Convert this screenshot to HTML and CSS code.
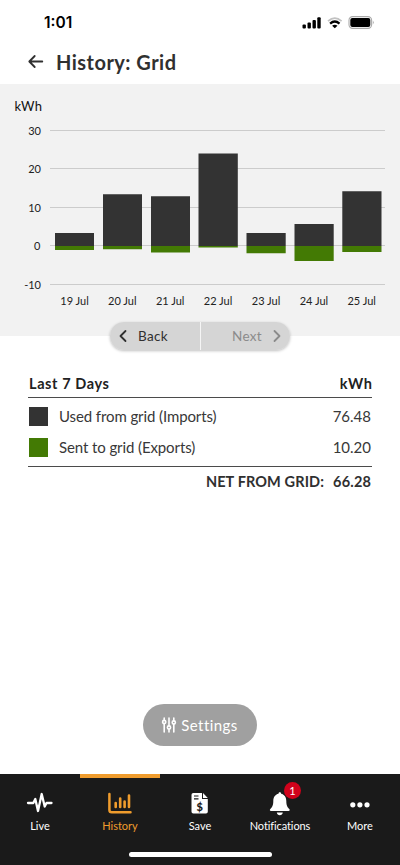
FILE: index.html
```html
<!DOCTYPE html>
<html lang="en">
<head>
<meta charset="utf-8">
<meta name="viewport" content="width=device-width, initial-scale=1">
<title>History: Grid</title>
<link rel="stylesheet" href="styles.css">
</head>
<body>
<div class="app">
  <div class="status">
    <span class="clock">1:01</span>
    <svg class="status-icons" width="74" height="16" viewBox="0 0 74 16">
      <g fill="#000"><rect x="2.500" y="9.500" width="3.400" height="4" rx="1"/><rect x="7.500" y="7.500" width="3.400" height="6" rx="1"/><rect x="12.500" y="5" width="3.400" height="8.500" rx="1"/><rect x="17.300" y="2.200" width="3.400" height="11.300" rx="1"/></g>
      <path d="M28 6.100Q34.800 .1 41.600 6.100" fill="none" stroke="#c2c2c2" stroke-width="1.800"/>
      <path d="M30.100 8.600Q34.800 4.500 39.500 8.600" fill="none" stroke="#000" stroke-width="2.300"/>
      <path d="M32.100 10.700Q34.800 8.600 37.500 10.700L34.800 13.200z"/>
      <rect x="49" y="1.600" width="22.600" height="11.800" rx="3.600" fill="#fff" stroke="#aaa" stroke-width="1.100"/>
      <rect x="50.300" y="3" width="20" height="9" rx="2"/>
      <path d="M72.900 5.600q1.700 1.900 0 3.800z" fill="#999"/>
    </svg>
  </div>
  <header class="header">
    <svg width="16" height="14" viewBox="0 0 16 14" fill="none" stroke="#303030" stroke-width="1.800" stroke-linecap="round" stroke-linejoin="round"><path d="M14.300 6.500H1.500M6.700 1L1.300 6.500L6.700 12"/></svg>
    <h1>History: Grid</h1>
  </header>
  <section class="chart">
    <svg width="400" height="252" viewBox="0 84 400 252">
      <g stroke="#ccc" stroke-width="1"><path d="M50 130.500H385M50 168.500H385M50 207.500H385M50 245.500H385M50 284.500H385"/></g>
      <g fill="#333"><path d="M55 233h39v13H55zM103 194.300h39V246h-39zM151 196.300h39V246h-39zM198.500 153.500h39.300V246h-39.300zM246.500 233h39.200v13h-39.200zM294.500 224h39.200v22h-39.200zM342.300 191.300h39.200V246h-39.200z"/></g>
      <g fill="#437a04"><path d="M55 246h39v4H55zM103 246h39v3.300h-39zM151 246h39v6.500h-39zM198.500 246h39.300v1.600h-39.300zM246.500 246h39.200v7.300h-39.200zM294.500 246h39.200v15h-39.200zM342.300 246h39.200v5.900h-39.200z"/></g>
      <text class="unit" x="14.500" y="110.500" textLength="27.500">kWh</text>
      <g class="tick" text-anchor="end"><text x="41" y="134.500">30</text><text x="41" y="173">20</text><text x="41" y="211.500">10</text><text x="40.500" y="250">0</text><text x="41" y="288.500">-10</text></g>
      <g class="tick" text-anchor="middle"><text x="74.500" y="305">19 Jul</text><text x="122.300" y="305">20 Jul</text><text x="170.200" y="305">21 Jul</text><text x="218.100" y="305">22 Jul</text><text x="266" y="305">23 Jul</text><text x="313.900" y="305">24 Jul</text><text x="361.700" y="305">25 Jul</text></g>
    </svg>
  </section>
  <div class="pager">
    <button class="back"><svg width="8" height="12" viewBox="0 0 8 12"><path d="M6.500 1L1.500 6l5 5"/></svg><span>Back</span></button>
    <button class="next"><span>Next</span><svg width="8" height="12" viewBox="0 0 8 12"><path d="M1.500 1l5 5l-5 5"/></svg></button>
  </div>
  <section class="summary">
    <div class="row head"><span class="period">Last 7 Days</span><span class="head-unit">kWh</span></div>
    <div class="items">
      <div class="row item"><i class="swatch imports"></i><span class="label used">Used from grid (Imports)</span><span class="value">76.48</span></div>
      <div class="row item"><i class="swatch exports"></i><span class="label sent">Sent to grid (Exports)</span><span class="value">10.20</span></div>
    </div>
    <div class="row total"><span class="net">NET FROM GRID:</span><span class="net-value">66.28</span></div>
  </section>
  <button class="settings">
    <svg width="14" height="16" viewBox="0 0 14 16" fill="none" stroke="#fff" stroke-width="1.600" stroke-linecap="round"><path d="M2.200 1V3M2.200 7V15M7 1V8.500M7 12.500V15M11.800 1V3.500M11.800 7.500V15"/><circle cx="2.200" cy="5" r="1.600"/><circle cx="7" cy="10.500" r="1.600"/><circle cx="11.800" cy="5.500" r="1.600"/></svg>
    <span>Settings</span>
  </button>
  <nav class="tabs">
    <a class="tab"><svg width="28" height="24" viewBox="0 0 28 24"><path d="M2 13H7.300L9.300 9L12 21L15.700 4L18.700 16.500L20.500 13H25.500" fill="none" stroke="#fff" stroke-width="2.300" stroke-linecap="round" stroke-linejoin="round"/></svg><span class="t-live">Live</span></a>
    <a class="tab active"><svg width="28" height="24" viewBox="0 0 28 24" fill="none" stroke="#ef9c2d" stroke-linecap="round" stroke-linejoin="round"><path d="M3.400 4V20Q3.400 22.300 5.700 22.300H24.500" stroke-width="2.500"/><path d="M9.700 13V17M14.200 8.500V17M18.600 11.500V17M23 5.500V17" stroke-width="2.600"/></svg><span class="t-history">History</span></a>
    <a class="tab"><svg width="28" height="24" viewBox="0 0 28 24"><path d="M7.300 3H16V9H21.800V21.800Q21.800 23.600 20 23.600H7.300Q5.500 23.600 5.500 21.800V4.800Q5.500 3 7.300 3zM17 3L21.800 8.100H17z" fill="#fff"/><path d="M8 6h4.500M8 8.800h4.500" stroke="#1a1a1a" stroke-width="1.200"/><text class="dollar" x="13.800" y="20.700" text-anchor="middle">$</text></svg><span class="t-save">Save</span></a>
    <a class="tab"><svg width="28" height="24" viewBox="0 0 28 24"><path fill="#fff" d="M13.800 2.300C14.800 2.300 15.100 3 15.100 3.800C18.500 4.500 20.300 7.500 20.300 11C20.300 16 21.800 17.500 23.300 19.100C24.100 20 23.800 21.100 22.600 21.100H5C3.800 21.100 3.500 20 4.300 19.100C5.800 17.500 7.300 16 7.300 11C7.300 7.500 9.100 4.500 12.500 3.800C12.500 3 12.800 2.300 13.800 2.300zM10.800 22.500H16.800Q16.300 25.300 13.800 25.300Q11.300 25.300 10.800 22.500z"/></svg><b class="badge">1</b><span class="t-notif">Notifications</span></a>
    <a class="tab"><svg width="28" height="24" viewBox="0 0 28 24" fill="#fff"><circle cx="6.800" cy="14.800" r="2.600"/><circle cx="13.900" cy="14.800" r="2.600"/><circle cx="21" cy="14.800" r="2.600"/></svg><span class="t-more">More</span></a>
  </nav>
  <div class="home"><i></i></div>
</div>
</body>
</html>
```
FILE: styles.css
```css
* { box-sizing: border-box; }
body { margin: 0; background: #fff; color: #303030; font-family: Lato, "Liberation Sans", sans-serif; font-variant-ligatures: none; }
svg { display: block; flex: none; overflow: visible; }
button { border: 0; padding: 0; font: inherit; color: inherit; background: none; }
.app { width: 400px; height: 865px; display: flex; flex-direction: column; overflow: hidden; }
.status { height: 44px; display: flex; align-items: flex-start; justify-content: space-between; padding: 15px 26px 0 44px; }
.clock { font: 600 15.500px/16px Inter, sans-serif; color: #000; letter-spacing: 0; }
.header { height: 40px; display: flex; align-items: center; gap: 12px; padding: 0 28px 5px; }
h1 { margin: 0; font-size: 20px; line-height: 26px; font-weight: 700; letter-spacing: .48px; }
.chart { height: 252px; background: #f2f2f2; }
.unit { font-size: 13px; fill: #111; }
.tick { font-size: 11px; fill: #222; }
.pager { width: 180px; height: 28px; margin: -14px auto 0; display: flex; gap: 1px; border-radius: 14px; background: #f5f5f5; box-shadow: 0 1px 3px rgba(0,0,0,.25); position: relative; font-size: 13.500px; }
.pager button { flex: 1; display: flex; align-items: center; background: #d5d5d5; letter-spacing: .3px; }
.pager svg { fill: none; stroke: #303030; stroke-width: 1.800; stroke-linecap: round; stroke-linejoin: round; }
.pager .back { border-radius: 14px 0 0 14px; padding-left: 9px; gap: 11px; }
.pager .next { border-radius: 0 14px 14px 0; justify-content: flex-end; padding-right: 9px; gap: 11px; color: #8b8b8b; }
.pager .next svg { stroke: #8b8b8b; }
.summary { margin: 23px 28px 0; font-size: 15px; }
.row { display: flex; align-items: center; justify-content: space-between; }
.head { height: 24px; padding: 0 0 3px 1px; font-size: 14.500px; font-weight: 700; color: #222; }
.period { letter-spacing: .6px; }
.head-unit { letter-spacing: .8px; margin-right: -.8px; }
.items { height: 70px; padding-top: 3px; border: solid #4b4b4b; border-width: 1px 0; }
.item { height: 31px; padding: 0 1px; color: #383838; }
.item span { padding-bottom: 2px; }
.swatch { width: 19px; height: 19px; margin-right: 11px; }
.imports { background: #333; }
.exports { background: #437a04; }
.label { margin-right: auto; letter-spacing: -.1px; }
.total { height: 29px; padding: 0 1px 1px 0; justify-content: flex-end; gap: 9px; font-size: 14.500px; font-weight: 700; }
.net { letter-spacing: .12px; }
.net-value { letter-spacing: .2px; margin-right: -.2px; }
.settings { width: 114px; height: 42px; margin: auto auto 28px; flex: none; border-radius: 21px; background: #a0a0a0; color: #fff; display: flex; align-items: center; justify-content: center; gap: 5px; font-size: 15px; letter-spacing: .45px; }
.tabs { height: 72px; flex: none; display: flex; background: #1a1a1a; }
.tab { width: 80px; display: flex; flex-direction: column; align-items: center; padding-top: 16px; gap: 4px; position: relative; color: #fff; font-size: 11px; line-height: 16px; }
.active { border-top: 4px solid #ef9c2d; padding-top: 12px; color: #ef9c2d; }
.t-notif { letter-spacing: -.1px; }
.dollar { font-size: 11px; font-weight: 900; fill: #1a1a1a; }
.badge { position: absolute; left: 44px; top: 8px; width: 17px; height: 17px; border-radius: 50%; background: #d0021b; font: 400 11px/17px Lato, sans-serif; text-align: center; }
.home { height: 19px; flex: none; padding-top: 6px; background: #1a1a1a; }
.home i { display: block; width: 143px; height: 5px; border-radius: 3px; margin: 0 auto; background: #fff; }
```
